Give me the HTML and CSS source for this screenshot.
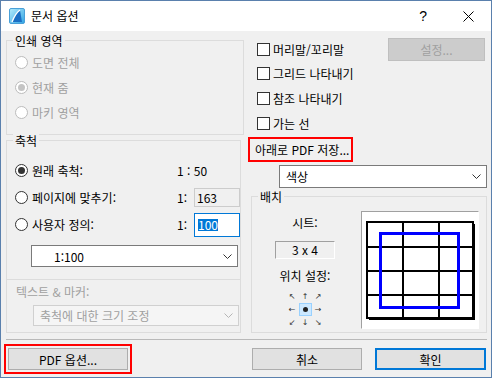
FILE: index.html
```html
<!DOCTYPE html>
<html lang="ko">
  <head>
    <meta charset="UTF-8" />
    <title>문서 옵션</title>
    <link rel="stylesheet" href="styles.css">
  </head>
  <body>
    <div class="dialog">
      <div class="titlebar">
        <svg class="app-icon" width="16" height="16" viewBox="0 0 16 16">
          <defs>
            <linearGradient id="ic" x1="0" y1="0" x2="1" y2="1">
              <stop offset="0" stop-color="#b4ecfb" />
              <stop offset="1" stop-color="#2fa3e4" />
            </linearGradient>
          </defs>
          <rect x="0.5" y="0.5" width="15" height="15" rx="1.5" fill="url(#ic)" stroke="#4aa0d8" />
          <path d="M3 14 C5 9 8 4 11 2 L13 14 Z" fill="#1b6fc4" />
          <path d="M3 14 C5 9 8 4 11 2" fill="none" stroke="#fff" stroke-width="1.4" />
        </svg>
        <span class="title">문서 옵션</span>
        <span class="help">?</span>
        <svg class="close" width="11" height="11" viewBox="0 0 11 11">
          <path d="M0.5 0.5 L10.5 10.5 M10.5 0.5 L0.5 10.5" stroke="#000" stroke-width="1" />
        </svg>
      </div>

      <div class="content">
        <div class="col-left">
          <div class="group group-area">
            <div class="group-title">인쇄 영역</div>
            <div class="area-rows">
              <div class="radio-row disabled"><span class="radio"></span>도면 전체</div>
              <div class="radio-row disabled"><span class="radio checked"></span>현재 줌</div>
              <div class="radio-row disabled"><span class="radio"></span>마키 영역</div>
            </div>
          </div>

          <div class="group group-scale">
            <div class="group-title">축척</div>
            <div class="scale-rows">
              <div class="scale-row">
                <div class="radio-row"><span class="radio checked"></span>원래 축척:</div>
                <div class="scale-val">1 : 50</div>
              </div>
              <div class="scale-row">
                <div class="radio-row"><span class="radio"></span>페이지에 맞추기:</div>
                <div class="scale-val"><span class="ratio">1:</span><span class="field field-off">163</span></div>
              </div>
              <div class="scale-row">
                <div class="radio-row"><span class="radio"></span>사용자 정의:</div>
                <div class="scale-val"><span class="ratio">1:</span><span class="field field-focus"><span class="sel">100</span></span></div>
              </div>
            </div>
            <div class="select select-scale">
              <span>1:100</span>
              <svg class="chev" width="9" height="5" viewBox="0 0 9 5"><path d="M0.5 0.5 L4.5 4.5 L8.5 0.5" fill="none" stroke="#333" /></svg>
            </div>
            <div class="marker">
              <div class="marker-label">텍스트 &amp; 마커:</div>
              <div class="select select-off">
                <span>축척에 대한 크기 조정</span>
                <svg class="chev" width="9" height="5" viewBox="0 0 9 5"><path d="M0.5 0.5 L4.5 4.5 L8.5 0.5" fill="none" stroke="#b5b5b5" /></svg>
              </div>
            </div>
          </div>
        </div>

        <div class="col-right">
          <div class="check-row first">
            <span class="check"></span>머리말/꼬리말
            <button class="btn btn-off">설정...</button>
          </div>
          <div class="check-row"><span class="check"></span>그리드 나타내기</div>
          <div class="check-row"><span class="check"></span>참조 나타내기</div>
          <div class="check-row"><span class="check"></span>가는 선</div>

          <div class="save-as">아래로 PDF 저장...</div>

          <div class="select select-color">
            <span>색상</span>
            <svg class="chev" width="9" height="5" viewBox="0 0 9 5"><path d="M0.5 0.5 L4.5 4.5 L8.5 0.5" fill="none" stroke="#333" /></svg>
          </div>

          <div class="group group-place">
            <div class="group-title">배치</div>
            <div class="place-body">
              <div class="place-left">
                <div class="sheet-label">시트:</div>
                <div class="sheet-box">3 x 4</div>
                <div class="pos-label">위치 설정:</div>
                <div class="pos-grid">
                  <span>↖</span><span>↑</span><span>↗</span>
                  <span>←</span><span class="pos-on"><i></i></span><span>→</span>
                  <span>↙</span><span>↓</span><span>↘</span>
                </div>
              </div>
              <svg class="preview" width="116" height="116" viewBox="0 0 116 116">
                <rect x="7" y="12" width="106" height="96" fill="#000" />
                <rect x="5" y="10" width="106" height="96" fill="#fff" stroke="#000" stroke-width="2" />
                <path d="M41 10 V106 M77 10 V106 M5 35 H111 M5 59 H111 M5 83 H111" stroke="#000" stroke-width="2" />
                <rect x="18.5" y="21.5" width="78" height="74" fill="none" stroke="#0000ff" stroke-width="3" />
              </svg>
            </div>
          </div>
        </div>
      </div>

      <div class="footer">
        <button class="btn btn-pdf">PDF 옵션...</button>
        <button class="btn btn-cancel">취소</button>
        <button class="btn btn-ok">확인</button>
      </div>
    </div>
  </body>
</html>
```

FILE: styles.css
```css
* {
  box-sizing: border-box;
}
body {
  margin: 0;
  font-family: "Noto Sans CJK KR", "Noto Sans", sans-serif;
  font-size: 12px;
  color: #000;
  background: #fff;
}
.dialog {
  width: 492px;
  height: 378px;
  border: 1px solid #5a80ad;
  background: #f0f0f0;
}

/* title bar */
.titlebar {
  height: 30px;
  background: #fff;
  display: flex;
  align-items: center;
}
.app-icon {
  margin-left: 8px;
}
.title {
  margin-left: 6px;
  line-height: 16px;
}
.help {
  margin-left: auto;
  margin-right: 36px;
  font-family: "Liberation Sans", sans-serif;
  font-size: 14px;
}
.close {
  margin-right: 17px;
}

/* layout */
.content {
  display: flex;
  height: 302px;
  padding-left: 5px;
}
.col-left {
  width: 238px;
  padding-top: 9px;
}
.col-right {
  width: 239px;
  margin-left: 4px;
}

/* group boxes */
.group {
  border: 1px solid #dcdcdc;
}
.group-title {
  width: max-content;
  margin: -7px 0 0 6px;
  padding: 0 2px;
  line-height: 14px;
  background: #f0f0f0;
}
.group-area {
  height: 95px;
}
.area-rows {
  padding: 2px 0 0 8px;
}
.group-scale {
  width: 235px;
  height: 193px;
  margin-top: 5px;
}

/* radios */
.radio-row {
  display: flex;
  align-items: center;
  height: 25px;
}
.radio {
  width: 13px;
  height: 13px;
  margin-right: 4px;
  border: 1px solid #333;
  border-radius: 50%;
  background: #fff;
  display: flex;
  align-items: center;
  justify-content: center;
  flex: none;
}
.radio.checked::after {
  content: "";
  width: 7px;
  height: 7px;
  border-radius: 50%;
  background: #333;
}
.disabled {
  color: #a0a0a0;
}
.disabled .radio {
  border-color: #bcbcbc;
}
.disabled .radio.checked::after {
  background: #c4c4c4;
}

/* scale rows */
.scale-rows {
  padding: 9px 0 0 8px;
}
.scale-row {
  display: flex;
  align-items: center;
  height: 27px;
}
.scale-row .radio-row {
  flex: 1;
}
.scale-val {
  width: 63px;
  display: flex;
  align-items: center;
}
.ratio {
  width: 17px;
}
.field {
  width: 46px;
  display: flex;
  align-items: center;
  padding-left: 2px;
}
.field-off {
  height: 19px;
  border: 1px solid #cccccc;
  background: #f0f0f0;
}
.field-focus {
  height: 24px;
  border: 1px solid #0078d7;
  background: #fff;
  padding-left: 3px;
}
.sel {
  background: #0078d7;
  color: #fff;
  line-height: 12px;
}

/* combo boxes */
.select {
  display: flex;
  align-items: center;
  border: 1px solid #7a7a7a;
  background: #fff;
}
.chev {
  margin-left: auto;
  margin-right: 5px;
}
.select-scale {
  width: 207px;
  height: 22px;
  margin: 7px 0 0 24px;
  padding-left: 22px;
}
.marker {
  margin-top: 12px;
  border-top: 1px solid #dcdcdc;
  padding: 5px 0 0 9px;
}
.marker-label {
  line-height: 14px;
  color: #a0a0a0;
}
.select-off {
  width: 206px;
  height: 21px;
  margin: 6px 0 0 17px;
  padding-left: 6px;
  border-color: #d0d0d0;
  background: #f5f5f5;
  color: #a0a0a0;
}

/* right column */
.check-row {
  display: flex;
  align-items: center;
  height: 25px;
  padding-left: 9px;
}
.check-row.first {
  height: 23px;
  margin-top: 7px;
}
.check {
  width: 13px;
  height: 13px;
  margin-right: 3px;
  border: 1px solid #333;
  background: #fff;
}
.btn {
  font: inherit;
  height: 22px;
  padding: 0;
  color: #000;
  background: #e1e1e1;
  border: 1px solid #adadad;
}
.btn-off {
  width: 97px;
  height: 23px;
  margin: 0 2px 0 auto;
  background: #cccccc;
  border-color: #bfbfbf;
  color: #a0a0a0;
}
.save-as {
  width: 105px;
  height: 25px;
  margin-top: 1px;
  border: 2px solid #ff0000;
  padding-left: 5px;
  line-height: 21px;
}
.select-color {
  width: 208px;
  height: 23px;
  margin: 3px 0 0 31px;
  padding-left: 6px;
}
.group-place {
  width: 236px;
  height: 137px;
  margin: 8px 0 0 3px;
}
.place-body {
  display: flex;
}
.place-left {
  width: 106px;
  display: flex;
  flex-direction: column;
  align-items: center;
}
.sheet-label {
  margin-top: 12px;
  line-height: 14px;
}
.sheet-box {
  width: 60px;
  height: 18px;
  margin-top: 11px;
  border: 1px solid;
  border-color: #a0a0a0 #fff #fff #a0a0a0;
  text-align: center;
  line-height: 16px;
}
.pos-label {
  margin-top: 10px;
  line-height: 14px;
}
.pos-grid {
  margin-top: 7px;
  display: grid;
  grid-template-columns: repeat(3, 13px);
  grid-auto-rows: 13px;
  font-family: "DejaVu Sans", sans-serif;
  font-size: 8px;
  color: #333;
}
.pos-grid span {
  display: flex;
  align-items: center;
  justify-content: center;
}
.pos-on {
  background: #cce8ff;
  border: 1px solid #99d1ff;
}
.pos-on i {
  width: 5px;
  height: 5px;
  border-radius: 50%;
  background: #222;
}
.preview {
  width: 118px;
  height: 118px;
  margin: 7px 0 0 3px;
  border: 1px solid;
  border-color: #a0a0a0 #fff #fff #a0a0a0;
  background: #fff;
}

/* footer */
.footer {
  display: flex;
  margin: 6px 4px 0 5px;
  padding-top: 8px;
  border-top: 1px solid #b9b9b9;
}
.btn-pdf {
  width: 120px;
  margin-left: 2px;
  outline: 2px solid #ff0000;
  outline-offset: 2px;
}
.btn-cancel {
  width: 110px;
  margin-left: 124px;
}
.btn-ok {
  width: 111px;
  margin-left: 13px;
  border: 2px solid #0078d7;
}
```
